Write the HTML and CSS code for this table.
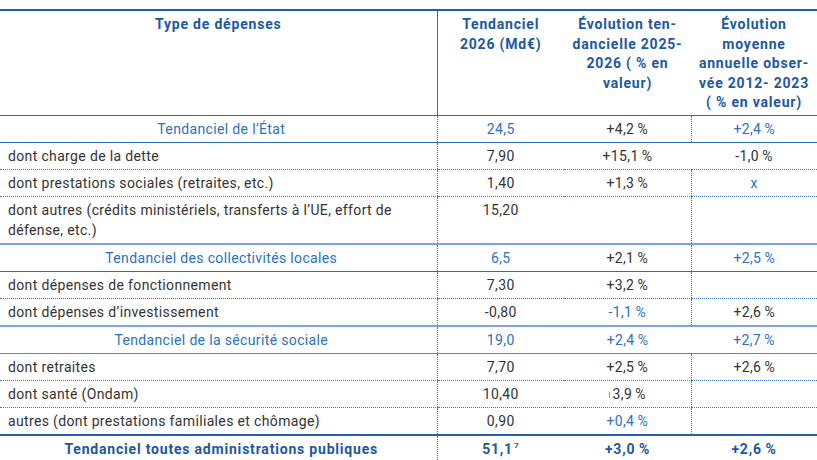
FILE: index.html
```html
<!DOCTYPE html>
<html lang="fr">
<head>
<meta charset="utf-8">
<title>Tendanciel des dépenses</title>
<link rel="stylesheet" href="styles.css">
</head>
<body>
<table class="tbl">
  <colgroup>
    <col class="w1"><col class="w2"><col class="w3"><col class="w4">
  </colgroup>
  <thead>
    <tr>
      <th class="c1">Type de dépenses</th>
      <th class="c2">Tendanciel<br>2026 (Md€)</th>
      <th class="c3">Évolution ten-<br>dancielle 2025-<br>2026 ( % en<br>valeur)</th>
      <th class="c4">Évolution<br>moyenne<br>annuelle obser-<br>vée 2012- 2023<br>( % en valeur)</th>
    </tr>
  </thead>
  <tbody>
    <tr class="sub">
      <td class="c1 ctr">Tendanciel de l’État</td>
      <td class="c2 blue">24,5</td>
      <td class="c3">+4,2&thinsp;%</td>
      <td class="c4 vl blue">+2,4&thinsp;%</td>
    </tr>
    <tr class="dot">
      <td class="c1">dont charge de la dette</td>
      <td class="c2">7,90</td>
      <td class="c3">+15,1&thinsp;%</td>
      <td class="c4">-1,0&thinsp;%</td>
    </tr>
    <tr class="dot">
      <td class="c1">dont prestations sociales (retraites, etc.)</td>
      <td class="c2">1,40</td>
      <td class="c3">+1,3&thinsp;%</td>
      <td class="c4 vl blue">x</td>
    </tr>
    <tr class="pre-sub">
      <td class="c1">dont autres (crédits ministériels, transferts à l’UE, effort de<br>défense, etc.)</td>
      <td class="c2">15,20</td>
      <td class="c3"></td>
      <td class="c4 vl"></td>
    </tr>
    <tr class="sub">
      <td class="c1 ctr">Tendanciel des collectivités locales</td>
      <td class="c2 blue">6,5</td>
      <td class="c3">+2,1&thinsp;%</td>
      <td class="c4 vl blue">+2,5&thinsp;%</td>
    </tr>
    <tr class="dot">
      <td class="c1">dont dépenses de fonctionnement</td>
      <td class="c2">7,30</td>
      <td class="c3">+3,2&thinsp;%</td>
      <td class="c4 vl"></td>
    </tr>
    <tr class="pre-sub">
      <td class="c1">dont dépenses d’investissement</td>
      <td class="c2">-0,80</td>
      <td class="c3 blue">-1,1&thinsp;%</td>
      <td class="c4 vl">+2,6&thinsp;%</td>
    </tr>
    <tr class="sub sub-light">
      <td class="c1 ctr">Tendanciel de la sécurité sociale</td>
      <td class="c2 blue">19,0</td>
      <td class="c3 blue">+2,4&thinsp;%</td>
      <td class="c4 blue">+2,7&thinsp;%</td>
    </tr>
    <tr class="dot">
      <td class="c1">dont retraites</td>
      <td class="c2">7,70</td>
      <td class="c3">+2,5&thinsp;%</td>
      <td class="c4 vl">+2,6&thinsp;%</td>
    </tr>
    <tr class="dot">
      <td class="c1">dont santé (Ondam)</td>
      <td class="c2">10,40</td>
      <td class="c3"><span class="tick"></span>3,9&thinsp;%</td>
      <td class="c4 vl"></td>
    </tr>
    <tr class="pre-total">
      <td class="c1">autres (dont prestations familiales et chômage)</td>
      <td class="c2">0,90</td>
      <td class="c3 blue">+0,4&thinsp;%</td>
      <td class="c4 vl"></td>
    </tr>
    <tr class="total">
      <td class="c1 ctr">Tendanciel toutes administrations publiques</td>
      <td class="c2 num-bold">51,1<sup>7</sup></td>
      <td class="c3">+3,0&thinsp;%</td>
      <td class="c4">+2,6&thinsp;%</td>
    </tr>
  </tbody>
</table>
</body>
</html>
```

FILE: styles.css
```css
html, body {
  margin: 0;
  padding: 0;
  background: #ffffff;
}

body {
  padding-top: 9px;
  font-family: Roboto, "Liberation Sans", sans-serif;
  font-size: 14px;
  letter-spacing: 0.35px;
  color: #333333;
  overflow: hidden;
}

.tbl {
  border-collapse: collapse;
  table-layout: fixed;
  width: 817px;
  border-top: 2px solid #1f5fa9;
}

.w1 { width: 437px; }
.w2 { width: 127px; }
.w3 { width: 127px; }
.w4 { width: 126px; }

.tbl th {
  font-weight: 700;
  letter-spacing: 0.8px;
  color: #1b58a3;
  line-height: 19.6px;
  padding: 4px 2px 2px;
  vertical-align: top;
  text-align: center;
  border-bottom: 1px solid #2e6cb5;
  white-space: nowrap;
}

.tbl th.c2 {
  border-left: 1px solid #2e6cb5;
}

.tbl td {
  line-height: 20px;
  padding: 3px 2px 3px;
  vertical-align: top;
  text-align: center;
  white-space: nowrap;
}

.tbl td.c1 {
  text-align: left;
  padding-left: 8px;
}

.tbl td.c1.ctr {
  text-align: center;
}

.tbl td.c2 {
  border-left: 1px dotted #3a7bc8;
}

.tbl td.vl {
  border-left: 1px dotted #3a7bc8;
}

.tbl tr.dot td {
  border-bottom: 1px dotted #3a7bc8;
}

.tbl tr.sub td {
  color: #2b72c2;
  border-bottom: 1px solid #2e6cb5;
}

.tbl tr.sub td.c3 {
  color: #333333;
}

.tbl tr.sub td.c3.blue {
  color: #2b72c2;
}

.tbl tr.sub-light td {
  border-bottom: 1px solid #4f86c6;
}

.tbl tr.pre-sub td {
  border-bottom: 2px solid #7ea5d5;
}

.tbl tr.pre-total td {
  border-bottom: 2px solid #2560a8;
}

.tbl td.blue {
  color: #2b72c2;
}

.tbl tr.total td {
  font-weight: 700;
  letter-spacing: 0.8px;
  color: #1b58a3;
  font-size: 14px;
}

.num-bold sup {
  font-size: 8px;
  line-height: 0;
  vertical-align: 6px;
  margin-left: 1px;
}

.tick {
  display: inline-block;
  width: 1px;
  height: 6px;
  background: #c98a55;
  margin-right: 3px;
  vertical-align: 1px;
}
```
